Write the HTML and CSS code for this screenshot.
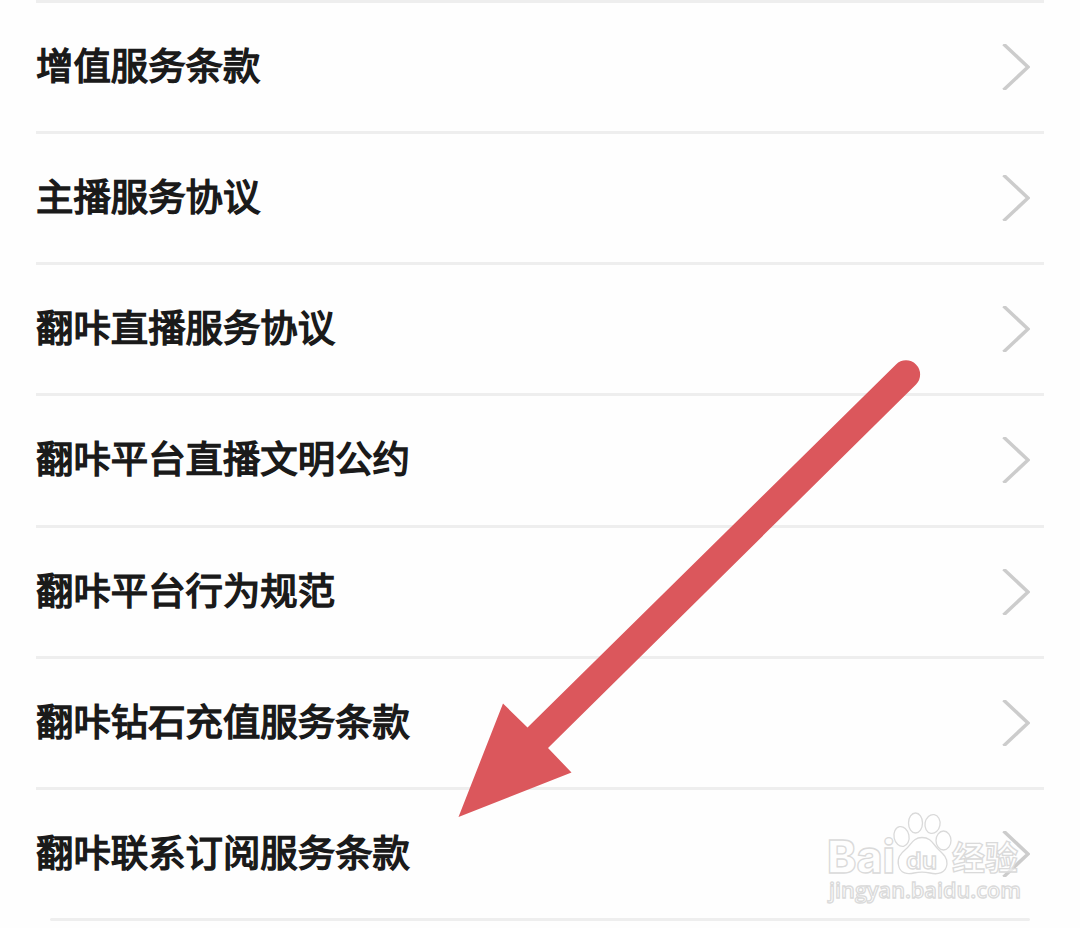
FILE: index.html
```html
<!DOCTYPE html>
<html lang="zh-CN">
<head>
<meta charset="utf-8">
<title>服务条款</title>
<link rel="stylesheet" href="styles.css">
</head>
<body>
<main class="page">
  <ul class="list">
    <li class="row"><span class="label">增值服务条款</span><svg class="chevron" viewBox="0 0 28 46"><path d="M1.5 0L26 23L1.5 46"/></svg></li>
    <li class="row"><span class="label">主播服务协议</span><svg class="chevron" viewBox="0 0 28 46"><path d="M1.5 0L26 23L1.5 46"/></svg></li>
    <li class="row"><span class="label">翻咔直播服务协议</span><svg class="chevron" viewBox="0 0 28 46"><path d="M1.5 0L26 23L1.5 46"/></svg></li>
    <li class="row"><span class="label">翻咔平台直播文明公约</span><svg class="chevron" viewBox="0 0 28 46"><path d="M1.5 0L26 23L1.5 46"/></svg></li>
    <li class="row"><span class="label">翻咔平台行为规范</span><svg class="chevron" viewBox="0 0 28 46"><path d="M1.5 0L26 23L1.5 46"/></svg></li>
    <li class="row"><span class="label">翻咔钻石充值服务条款</span><svg class="chevron" viewBox="0 0 28 46"><path d="M1.5 0L26 23L1.5 46"/></svg></li>
    <li class="row"><span class="label">翻咔联系订阅服务条款</span><svg class="chevron" viewBox="0 0 28 46"><path d="M1.5 0L26 23L1.5 46"/></svg></li>
  </ul>
  <div class="end-line"></div>

  <svg class="arrow" viewBox="0 0 1080 928">
    <path d="M458.5 817L503 703.500L527.500 727.500L896 364.500A14 14 0 0 1 916 384.500L548 748L571.500 772.500Z"/>
  </svg>

  <svg class="watermark" viewBox="0 0 240 128">
    <g class="mark">
      <text class="brand" x="17" y="73" textLength="68" lengthAdjust="spacingAndGlyphs">Bai</text>
      <ellipse cx="91.500" cy="36.500" rx="7.500" ry="10" transform="rotate(-12 91.500 36.500)"/>
      <ellipse cx="105.500" cy="23" rx="7" ry="10"/>
      <ellipse cx="122.500" cy="24" rx="7.500" ry="9.500" transform="rotate(10 122.500 24)"/>
      <ellipse cx="133.500" cy="40.500" rx="7.500" ry="9.500"/>
      <path d="M112 37.500C103 37.500 101 45 96 49C90 54 87 58 88.500 65C90 74 98 74.500 104 73C109 72 115 72 120 73C128 75 136 73 137 64C137.500 57 132 53 128 49C123 44 121 37.500 112 37.500Z"/>
      <text class="du" x="96" y="69" textLength="31" lengthAdjust="spacingAndGlyphs">du</text>
      <text class="cn" x="142" y="70" textLength="66" lengthAdjust="spacingAndGlyphs">经验</text>
      <text class="url" x="19" y="98" textLength="192" lengthAdjust="spacingAndGlyphs">jingyan.baidu.com</text>
    </g>
  </svg>
</main>
</body>
</html>
```
FILE: styles.css
```css
body {
  margin: 0;
  background: #fefefe;
}

.page {
  position: relative;
  box-sizing: border-box;
  width: 1080px;
  height: 928px;
  padding: 0 36px;
  overflow: hidden;
  font-family: "Noto Sans CJK SC", sans-serif;
  color: #1a1a1a;
}

.list {
  margin: 0;
  padding: 0;
  list-style: none;
}

.row {
  display: flex;
  align-items: center;
  justify-content: space-between;
  box-sizing: border-box;
  height: 131.15px;
  padding-right: 14px;
  border-top: 3px solid #eeeeee;
}

.label {
  padding-bottom: 6px;
  font-size: 37.400px;
  font-weight: 400;
  line-height: 54px;
  -webkit-text-stroke: 1.500px #1a1a1a;
}

.chevron {
  width: 28px;
  height: 46px;
  fill: none;
  stroke: #cccccc;
  stroke-width: 3.500;
}

.end-line {
  height: 3px;
  margin: 0 14px;
  border-radius: 3px;
  background: #eeeeee;
}

.arrow {
  position: absolute;
  left: 0;
  top: 0;
  width: 1080px;
  height: 928px;
  fill: #db575c;
}

.watermark {
  position: absolute;
  left: 810px;
  top: 800px;
  width: 240px;
  height: 128px;
}

.mark {
  fill: #ffffff;
  fill-opacity: 0.600;
  stroke: #dadada;
  stroke-width: 1.300;
}

.brand {
  font-family: Inter, sans-serif;
  font-size: 45px;
  font-weight: 800;
}

.du {
  font-family: Inter, sans-serif;
  font-size: 23px;
  font-weight: 600;
}

.cn {
  font-size: 33px;
  font-weight: 700;
}

.url {
  font-family: "Open Sans", sans-serif;
  font-size: 21px;
  font-weight: 600;
}
```
